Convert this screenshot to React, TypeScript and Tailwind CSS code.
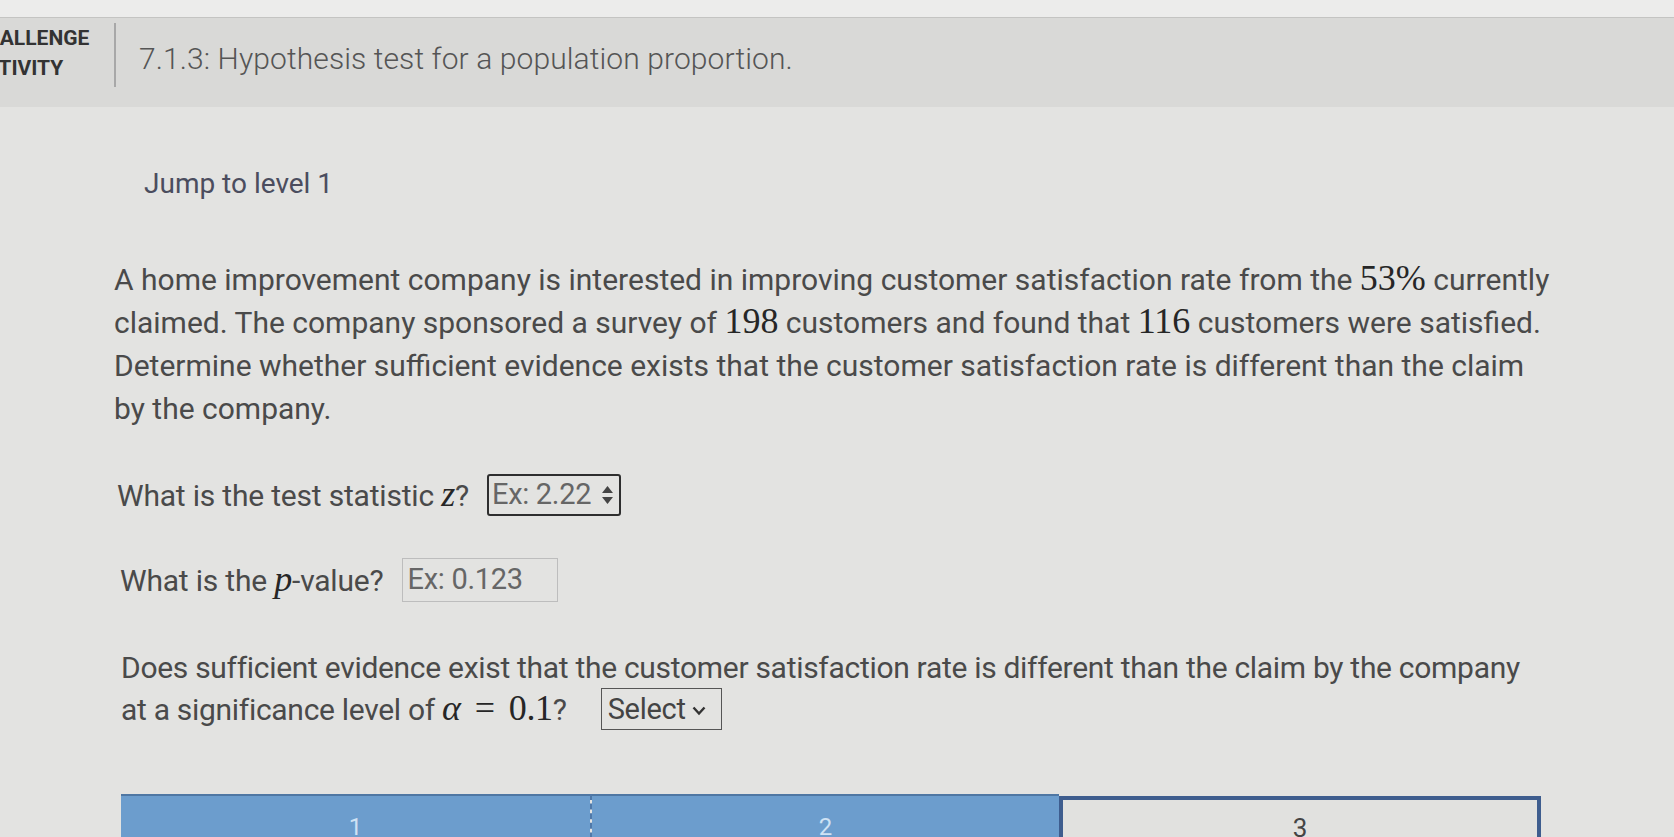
import React from "react";

const M = ({ children, italic = false }: { children: React.ReactNode; italic?: boolean }) => (
  <span
    className={`font-['Liberation_Serif','DejaVu_Serif',serif] text-[36px] leading-[30px] text-[#262626] ${italic ? "italic" : ""}`}
  >
    {children}
  </span>
);

export default function App() {
  return (
    <div className="w-[1674px] h-[837px] overflow-hidden bg-[#e3e3e1] font-['Roboto',sans-serif] text-[#4a4a4a] flex flex-col">
      <div className="h-[18px] shrink-0 bg-[#ececeb] border-b border-[#c4c4c2]" />
      <header className="h-[89px] shrink-0 bg-[#d9d9d7] flex items-start">
        <div className="w-[114px] shrink-0 overflow-hidden mt-[5px]">
          <div className="-ml-[29px] font-bold text-[21px] leading-[30px] text-[#333] whitespace-nowrap">
            <div>CHALLENGE</div>
            <div>ACTIVITY</div>
          </div>
        </div>
        <div className="w-[2px] h-[64px] mt-[5px] bg-[#a8a8a8] shrink-0" />
        <h1 className="ml-[23px] mt-[23px] text-[30px] leading-[35px] font-light tracking-[0.1px] text-[#555] whitespace-nowrap">
          7.1.3: Hypothesis test for a population proportion.
        </h1>
      </header>

      <div className="ml-[144px] mt-[59px] text-[28px] leading-[36px] text-[#4b4d5e]">
        Jump to level 1
      </div>

      <div className="ml-[114px] mt-[56px] text-[30px] leading-[43px] text-[#4a4a4a] whitespace-nowrap">
        <div>
          A home improvement company is interested in improving customer satisfaction rate from the <M>53%</M> currently
        </div>
        <div>
          claimed. The company sponsored a survey of <M>198</M> customers and found that <M>116</M> customers were satisfied.
        </div>
        <div>Determine whether sufficient evidence exists that the customer satisfaction rate is different than the claim</div>
        <div>by the company.</div>
      </div>

      <div className="ml-[117px] mt-[44px] h-[42px] flex items-center text-[30px] tracking-[-0.2px] whitespace-nowrap">
        <span>
          What is the test statistic <M italic>z</M>?
        </span>
        <div className="ml-[18px] h-[42px] w-[134px] border-2 border-[#2e2e2e] rounded-[3px] flex items-center pl-[3px] pr-[5px]">
          <span className="text-[#666] text-[29px] tracking-[-0.3px]">Ex: 2.22</span>
          <svg className="ml-auto" width="13" height="24" viewBox="0 0 13 24">
            <path d="M6.5 3 L12 10 L1 10 Z" fill="#444" />
            <path d="M6.5 21 L12 14 L1 14 Z" fill="#444" />
          </svg>
        </div>
      </div>

      <div className="ml-[120px] mt-[42px] h-[44px] flex items-center text-[30px] tracking-[-0.2px] whitespace-nowrap">
        <span>
          What is the <M italic>p</M>-value?
        </span>
        <div className="ml-[18px] h-[44px] w-[156px] border border-[#bdbdbd] flex items-center pl-[5px]">
          <span className="text-[#666] text-[29px] tracking-[-0.3px]">Ex: 0.123</span>
        </div>
      </div>

      <div className="ml-[121px] mt-[45px] text-[30px] leading-[41px] tracking-[-0.3px] whitespace-nowrap">
        <div>Does sufficient evidence exist that the customer satisfaction rate is different than the claim by the company</div>
        <div className="flex items-center">
          <span>
            at a significance level of <M italic>α</M>
            <span className="mx-[14px]">
              <M>=</M>
            </span>
            <M>0.1</M>?
          </span>
          <div className="ml-[34px] h-[42px] w-[121px] border border-[#555] flex items-center pl-[6px]">
            <span className="text-[#444] text-[29px] tracking-[-0.3px]">Select</span>
            <svg className="ml-[6px] mt-[3px]" width="14" height="10" viewBox="0 0 14 10">
              <path d="M1.5 1.5 L7 7.5 L12.5 1.5" fill="none" stroke="#333" strokeWidth="2.4" />
            </svg>
          </div>
        </div>
      </div>

      <div className="ml-[121px] mt-[64px] w-[1420px] flex-1 flex">
        <div className="w-[469px] bg-[#6c9dcd] border-t-2 border-[#4f77a3] flex justify-center pt-[13px] text-[24px] text-[#cfe2f4]">
          1
        </div>
        <div className="w-0 border-l-2 border-dashed border-[#4f78a8]" />
        <div className="w-[467px] bg-[#6c9dcd] border-t-2 border-[#4f77a3] flex justify-center pt-[13px] text-[24px] text-[#cfe2f4]">
          2
        </div>
        <div className="flex-1 mt-[2px] border-t-4 border-x-4 border-[#3e5d8e] bg-[#e1e1df] flex justify-center pt-[9px] text-[26px] text-[#444]">
          3
        </div>
      </div>
    </div>
  );
}
